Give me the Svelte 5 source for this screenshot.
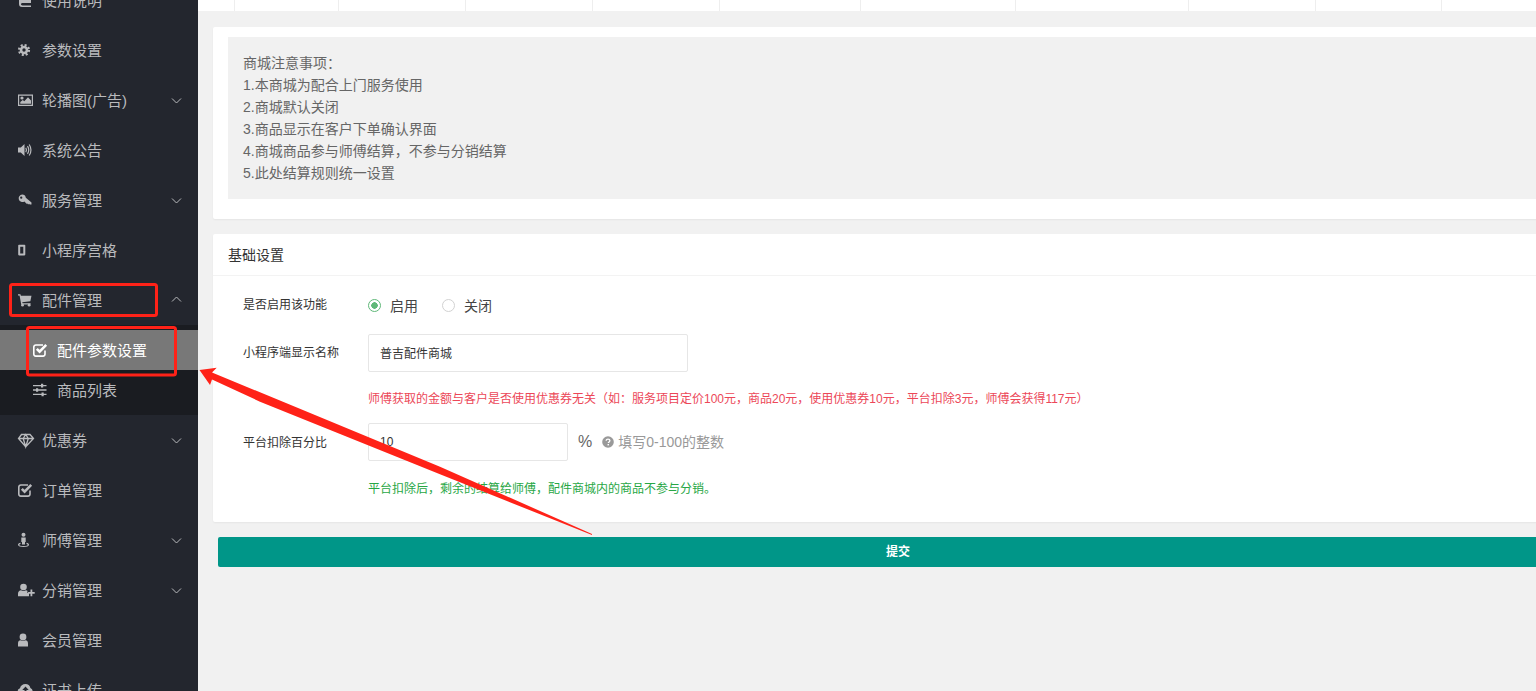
<script>
    // fontawesome-like glyphs, left aligned in a 16x16 box like the original icon font
    const icons = {
        book: '<path d="M2 1h11v10H4.500C3.500 11 3 11.600 3 12.300s.5 1.200 1.500 1.200H13V15H4C2 15 1 13.800 1 12V3c0-1 .4-2 1-2z"/>',
        cog: '<circle cx="6" cy="8" r="3" fill="none" stroke="currentColor" stroke-width="2.600"/><circle cx="6" cy="8" r="5" fill="none" stroke="currentColor" stroke-width="2.200" stroke-dasharray="2 1.930"/>',
        picture: '<path fill-rule="evenodd" d="M0 2.500h15v11.500H0zM1.200 3.700v9.100h12.600V3.700z"/><circle cx="4" cy="6" r="1.600"/><path d="M2.300 11.800V10l2.500-2 1.500 1.300L10 5.200l3 3.300v3.300z"/>',
        volume: '<path d="M0 5.500h2.800L6.500 2v12L2.800 10.500H0z"/><path d="M7.800 5.800q1.300 2.200 0 4.400M9.500 4.200q2.500 3.800 0 7.600M11.200 2.500q3.500 5.500 0 11" fill="none" stroke="currentColor" stroke-width="1.200"/>',
        key: '<path fill-rule="evenodd" transform="scale(.87) translate(0 1)" d="M4.800 2a4.300 4.300 0 0 1 4.200 3.500L15.500 11v2.500h-2l-.8-1-1 .8-1-1.200-.9.500-2.400-2.700A4.300 4.300 0 1 1 4.800 2zM3.700 4.200a1.300 1.300 0 1 0 0 2.600 1.300 1.300 0 0 0 0-2.600z"/>',
        mobile: '<path fill-rule="evenodd" d="M1 2.800h5.500a.8.8 0 0 1 .8.800v9a.8.8 0 0 1-.8.800H1a.8.8 0 0 1-.8-.8v-9a.8.8 0 0 1 .8-.8zM2.200 4.800v6.600h3.100V4.800z"/>',
        cart: '<g transform="translate(0 1) scale(.87)"><path d="M0 1.500h2.800l.5 1.700H15.500l-1.300 6.300-9.300 1 .3 1.200h9.300v1.400H3.700L1.800 3H0z"/><circle cx="5.200" cy="14" r="1.600"/><circle cx="12.800" cy="14" r="1.600"/></g>',
        check: '<path d="M12 8.500v3.600a2 2 0 0 1-2 2H2.800a2 2 0 0 1-2-2V5a2 2 0 0 1 2-2H10" fill="none" stroke="currentColor" stroke-width="1.600"/><path d="M3.800 6.800l2.800 2.800L13.200 2.800" fill="none" stroke="currentColor" stroke-width="2.600"/>',
        sliders: '<path d="M0 3.600h13.500M0 8h13.500M0 12.400h13.500" stroke="currentColor" stroke-width="1.300"/><path d="M8 1.800h2.200v3.600H8zM3 6.200h2.200v3.600H3zM8.500 10.600h2.200v3.600H8.500z"/>',
        diamond: '<path d="M3.500 2.500h8.500l3.500 4-7.800 8.300L.5 6.500zM.5 6.500h15M5.200 6.500l2.500 8.300 2.600-8.300L7.700 2.500z" fill="none" stroke="currentColor" stroke-width="1.300"/>',
        street: '<circle cx="5.500" cy="2.800" r="2"/><path d="M3.300 5.500h4.400v4.500H7v2.500H4V10h-.7z"/><path d="M2.500 10.800C1 11.200 0 11.800 0 12.800 0 14.200 2.500 15 5.500 15s5.500-.8 5.500-2.200c0-1-1-1.600-2.500-2v1.200c.8.200 1.200.5 1.200.9 0 .7-1.900 1-4.200 1s-4.200-.3-4.200-1c0-.4.400-.7 1.200-.9z"/>',
        userplus: '<circle cx="5.500" cy="5" r="3.300"/><path d="M0 14.200v-2.500C0 9.500 1.500 8.300 3 8.300c1.500 1 3.500 1 5 0 .5 0 1 .2 1.400.4V11H11v3.200z"/><path d="M12.500 7.500h1.800v2.400h2.400v1.800h-2.400v2.500h-1.800v-2.500h-2.400V9.900h2.400z"/>',
        user: '<circle cx="5" cy="5" r="3.400"/><path d="M0 14.500v-3C0 9.500 1.200 8.300 2.500 8.300c1.500 1 3.500 1 5 0 1.300 0 2.500 1.200 2.500 3.200v3z"/>',
        upload: '<path fill-rule="evenodd" d="M7.500 2c2.500 0 4.400 1.600 4.900 3.900A3.800 3.800 0 0 1 12 13H3a3.500 3.500 0 0 1-1-6.800C2.400 3.800 4.700 2 7.500 2zM7.500 4.500L4.300 8h2.200v3h2V8h2.200z"/>'
    };

    const menu = [
        { label: '使用说明', icon: 'book' },
        { label: '参数设置', icon: 'cog' },
        { label: '轮播图(广告)', icon: 'picture', arrow: 'down' },
        { label: '系统公告', icon: 'volume' },
        { label: '服务管理', icon: 'key', arrow: 'down' },
        { label: '小程序宫格', icon: 'mobile' },
        {
            label: '配件管理',
            icon: 'cart',
            arrow: 'up',
            children: [
                { label: '配件参数设置', icon: 'check', active: true },
                { label: '商品列表', icon: 'sliders' }
            ]
        },
        { label: '优惠券', icon: 'diamond', arrow: 'down' },
        { label: '订单管理', icon: 'check' },
        { label: '师傅管理', icon: 'street', arrow: 'down' },
        { label: '分销管理', icon: 'userplus', arrow: 'down' },
        { label: '会员管理', icon: 'user' },
        { label: '证书上传', icon: 'upload' }
    ];

    const notes = [
        '商城注意事项：',
        '1.本商城为配合上门服务使用',
        '2.商城默认关闭',
        '3.商品显示在客户下单确认界面',
        '4.商城商品参与师傅结算，不参与分销结算',
        '5.此处结算规则统一设置'
    ];

    let enabled = '1';
    let shopName = '普吉配件商城';
    let percent = '10';
</script>

<div class="page">
    <aside class="sidebar">
        <ul class="nav">
            {#each menu as item}
                <li>
                    <div class="nav-row">
                        <svg class="icon" viewBox="0 0 16 16" fill="currentColor">{@html icons[item.icon]}</svg>
                        <span>{item.label}</span>
                        {#if item.arrow}
                            <svg class="chevron" class:up={item.arrow === 'up'} viewBox="0 0 10 6">
                                <path d="M.5 .5L5 5l4.500-4.500" />
                            </svg>
                        {/if}
                    </div>
                    {#if item.children}
                        <ul class="sub">
                            {#each item.children as child}
                                <li class="sub-row" class:active={child.active}>
                                    <svg class="icon" viewBox="0 0 16 16" fill="currentColor">{@html icons[child.icon]}</svg>
                                    <span>{child.label}</span>
                                </li>
                            {/each}
                        </ul>
                    {/if}
                </li>
            {/each}
        </ul>
    </aside>

    <main class="main">
        <div class="table-end">
            {#each Array(11) as _}
                <div></div>
            {/each}
        </div>

        <div class="content">
            <section class="card notes-card">
                <div class="notes">
                    {#each notes as line}
                        <p>{line}</p>
                    {/each}
                </div>
            </section>

            <section class="card">
                <header class="card-head">基础设置</header>
                <form class="form" on:submit|preventDefault>
                    <div class="row radios-row">
                        <span class="label">是否启用该功能</span>
                        <label class="radio">
                            <input type="radio" bind:group={enabled} value="1" />
                            <i></i>启用
                        </label>
                        <label class="radio">
                            <input type="radio" bind:group={enabled} value="0" />
                            <i></i>关闭
                        </label>
                    </div>
                    <div class="row name-row">
                        <span class="label">小程序端显示名称</span>
                        <input class="text long" type="text" bind:value={shopName} />
                    </div>
                    <p class="tip red">师傅获取的金额与客户是否使用优惠券无关（如：服务项目定价100元，商品20元，使用优惠券10元，平台扣除3元，师傅会获得117元）</p>
                    <div class="row percent-row">
                        <span class="label">平台扣除百分比</span>
                        <input class="text short" type="text" bind:value={percent} />
                        <span class="unit">%</span>
                        <span class="hint">
                            <svg viewBox="0 0 12 12"><circle cx="6" cy="6" r="5.800" fill="#999" /><path d="M4.200 4.700C4.200 3.700 5 3.100 6 3.100s1.900.6 1.900 1.500c0 1.300-1.600 1.300-1.600 2.500" fill="none" stroke="#fff" stroke-width="1.300" /><rect x="5.500" y="8" width="1.500" height="1.400" fill="#fff" /></svg>
                            填写0-100的整数
                        </span>
                    </div>
                    <p class="tip green">平台扣除后，剩余的结算给师傅，配件商城内的商品不参与分销。</p>
                </form>
            </section>

            <button class="submit" type="button">提交</button>
        </div>
    </main>

    <!-- red annotations someone drew on top of the screenshot -->
    <svg class="marks" viewBox="0 0 1536 691">
        <rect x="10.500" y="284.500" width="146" height="31" rx="2" />
        <rect x="27.500" y="327.500" width="148" height="47.500" rx="2" />
        <polygon points="199.500,370 216.700,367.700 212,372.500 260,392.300 440,466.700 592,534 592,535 440,474.300 260,401.700 212,379.500 210,385" />
    </svg>
</div>

<style>
    :global(body) {
        background: #f1f1f1;
    }

    .page {
        position: relative;
        display: flex;
        height: 691px;
        overflow: hidden;
        font-family: "Liberation Sans", "Noto Sans CJK SC", sans-serif;
        color: #333;
    }

    .sidebar {
        flex: 0 0 198px;
        background: #23262e;
        overflow: hidden;
    }

    ul {
        list-style: none;
        margin: 0;
        padding: 0;
    }

    /* the page is scrolled a bit, first entry is half cut off */
    .nav {
        margin-top: -25px;
    }

    .nav-row {
        display: flex;
        align-items: center;
        height: 50px;
        padding-left: 18px;
        font-size: 15px;
        color: #b9babd;
    }

    .nav-row span,
    .sub-row span {
        margin-top: -2px;
    }

    .icon {
        flex: none;
        width: 16px;
        height: 16px;
        margin-right: 8px;
        overflow: visible;
    }

    .chevron {
        width: 11px;
        height: 6px;
        margin-left: auto;
        margin-right: 16px;
        fill: none;
        stroke: currentColor;
        stroke-width: 1;
        transform: translateY(1px);
    }

    .chevron.up {
        transform: translateY(-1px) rotate(180deg);
    }

    .sub {
        padding: 5px 0;
        background: #1a1c21;
    }

    .sub-row {
        display: flex;
        align-items: center;
        height: 40px;
        padding-left: 33px;
        font-size: 15px;
        color: #b9babd;
    }

    .sub-row.active {
        background: #787878;
        color: #fff;
    }

    .main {
        flex: 0 0 1400px;
    }

    .table-end {
        display: grid;
        grid-template-columns: 37px 104px 127px 127px 127px 141px 155px 173px 127px 126px 1fr;
        height: 11px;
        background: #fff;
    }

    .table-end div {
        border-right: 1px solid #eee;
    }

    .content {
        padding: 16px 15px 0;
    }

    .card {
        margin-bottom: 15px;
        background: #fff;
        border-radius: 2px;
        box-shadow: 0 1px 2px rgba(0, 0, 0, 0.05);
    }

    .notes-card {
        padding: 10px 15px 20px;
    }

    .notes {
        padding: 15px;
        background: #f1f1f1;
        font-size: 14px;
        line-height: 22px;
        color: #666;
    }

    .notes p {
        margin: 0;
    }

    .card-head {
        height: 41px;
        padding-left: 15px;
        border-bottom: 1px solid #f3f3f3;
        font-size: 14px;
        line-height: 43px;
    }

    .form {
        padding: 14px 30px 25px;
    }

    .row {
        display: flex;
        align-items: center;
    }

    .label {
        flex: 0 0 125px;
        margin-top: -2px;
        font-size: 12px;
    }

    .radios-row {
        height: 30px;
        margin-bottom: 14px;
    }

    .radios-row .label,
    .name-row .label {
        margin-top: -4px;
    }

    .radio {
        display: flex;
        align-items: center;
        margin-top: 1px;
        margin-right: 24px;
        font-size: 14px;
        line-height: 30px;
        color: #444;
    }

    .radio input {
        display: none;
    }

    .radio i {
        width: 13px;
        height: 13px;
        margin-right: 9px;
        box-sizing: border-box;
        border: 1px solid #d2d2d2;
        border-radius: 50%;
        background: #fff;
    }

    .radio input:checked + i {
        border-color: #5fb878;
        background: radial-gradient(circle, #5fb878 0 3px, #fff 3.5px);
    }

    .text {
        box-sizing: border-box;
        height: 38px;
        padding: 0 11px;
        border: 1px solid #e6e6e6;
        border-radius: 2px;
        background: #fff;
        font: inherit;
        font-size: 12px;
        color: #333;
        outline: none;
    }

    .long {
        width: 320px;
        padding-bottom: 2px;
    }

    .short {
        width: 200px;
    }

    .tip {
        margin: 19px 0 16px 125px;
        font-size: 12px;
        line-height: 16px;
    }

    .red {
        color: #ec4758;
    }

    .green {
        margin-top: 20px;
        margin-bottom: 0;
        color: #28a745;
    }

    .unit {
        margin-left: 10px;
        font-size: 16px;
        color: #666;
    }

    .hint {
        display: flex;
        align-items: center;
        gap: 4px;
        margin-top: -2px;
        margin-left: 10px;
        font-size: 14px;
        color: #999;
    }

    .hint svg {
        width: 12px;
        height: 12px;
        margin-top: 2px;
    }

    .submit {
        display: block;
        width: 1360px;
        height: 30px;
        padding: 0 0 3px;
        margin-left: 5px;
        border: none;
        border-radius: 2px;
        background: #009688;
        font: inherit;
        font-size: 12px;
        font-weight: bold;
        color: #fff;
    }

    .marks {
        position: absolute;
        inset: 0;
        width: 1536px;
        height: 691px;
        pointer-events: none;
    }

    .marks rect {
        fill: none;
        stroke: #ff2218;
        stroke-width: 3;
    }

    .marks polygon {
        fill: #ff2218;
    }
</style>
